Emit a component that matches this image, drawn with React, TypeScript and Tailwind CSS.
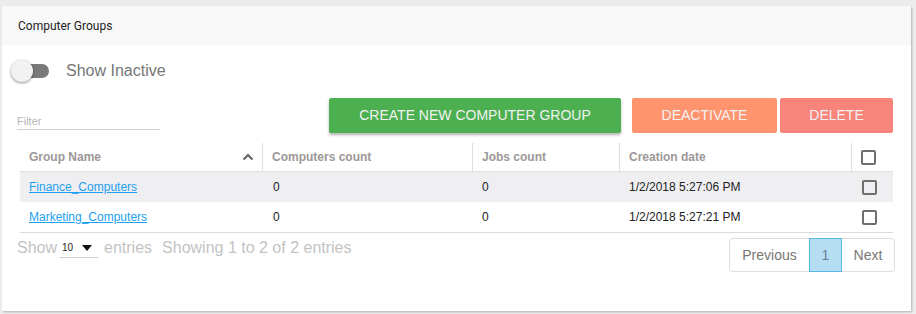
import React from 'react';

const rows = [
  { name: 'Finance_Computers', computers: 0, jobs: 0, created: '1/2/2018 5:27:06 PM' },
  { name: 'Marketing_Computers', computers: 0, jobs: 0, created: '1/2/2018 5:27:21 PM' },
];

const Box: React.FC = () => (
  <span className="block w-[15px] h-[15px] border-2 border-[#6f6f6f] rounded-[2px]" />
);

export default function App() {
  return (
    <div className="w-[916px] h-[314px] bg-[#ececec] pt-[6px] pl-[2px] font-['Liberation_Sans',Arial,sans-serif]">
      <div className="w-[909px] h-[305px] bg-white shadow-[1px_1px_2px_rgba(0,0,0,0.25)]">
        <div className="h-[39px] bg-[#f8f8f8] flex items-center pl-[16px] text-[12px] text-[#222] font-['Roboto',sans-serif]">
          Computer Groups
        </div>

        <div className="flex items-center h-[52px] pl-[10px]">
          <div className="relative w-[37px] h-[14px] bg-[#7a7a7a] rounded-full">
            <span className="absolute left-[-1px] top-[-4px] w-[22px] h-[22px] rounded-full bg-[#f2f2f2] shadow-[0_1px_3px_rgba(0,0,0,0.45)]" />
          </div>
          <span className="ml-[17px] text-[16px] text-[#767676]">Show Inactive</span>
        </div>

        <div className="flex items-start h-[36px] pl-[15px] pr-[16px]">
          <div className="w-[143px] h-[33px] flex items-end border-b border-[#d0d0d0]">
            <span className="text-[11px] text-[#b5b5b5]">Filter</span>
          </div>
          <div className="ml-auto mr-[2px] mt-[1px] flex h-[35px] text-[14px] text-[#f2f2f2]">
            <button className="w-[292px] bg-[#4caf50] rounded-[2px] shadow-[0_2px_3px_rgba(0,0,0,0.3)]">
              CREATE NEW COMPUTER GROUP
            </button>
            <button className="ml-[11px] w-[145px] bg-[#ff946e] rounded-[2px]">DEACTIVATE</button>
            <button className="ml-[3px] w-[113px] bg-[#f8847b] rounded-[2px]">DELETE</button>
          </div>
        </div>

        <div className="mx-[18px] mt-[10px] text-[12px]">
          <div className="flex h-[29px] border-b border-[#e0e0e0] font-bold text-[#9d9797]">
            <div className="w-[243px] flex items-center pl-[9px] pr-[8px] border-r border-[#e0e0e0]">
              Group Name
              <svg className="ml-auto" width="12" height="8" viewBox="0 0 12 8">
                <path d="M1.5 6.5 L6 2 L10.5 6.5" stroke="#666" strokeWidth="2.2" fill="none" />
              </svg>
            </div>
            <div className="w-[210px] flex items-center pl-[9px] border-r border-[#e0e0e0]">Computers count</div>
            <div className="w-[147px] flex items-center pl-[9px] border-r border-[#e0e0e0]">Jobs count</div>
            <div className="w-[232px] flex items-center pl-[9px] border-r border-[#e0e0e0]">Creation date</div>
            <div className="flex-1 flex items-center pl-[9px]">
              <Box />
            </div>
          </div>
          {rows.map((r, i) => (
            <div
              key={r.name}
              className={`flex h-[30px] items-center text-[#222] ${i === 0 ? 'bg-[#efeff1]' : 'bg-white'}`}
            >
              <div className="w-[243px] pl-[9px]">
                <a href="#" className="text-[#1ea0f0] underline">{r.name}</a>
              </div>
              <div className="w-[210px] pl-[10px]">{r.computers}</div>
              <div className="w-[147px] pl-[9px]">{r.jobs}</div>
              <div className="w-[232px] pl-[9px]">{r.created}</div>
              <div className="flex-1 pl-[10px]">
                <Box />
              </div>
            </div>
          ))}
          <div className="border-t border-[#dcdcdc]" />
        </div>

        <div className="flex items-start pl-[15px] pr-[16px] mt-[4px]">
          <div className="flex items-center text-[16px] text-[#c3c3c3] h-[22px]">
            <span>Show</span>
            <span className="ml-[3px] w-[38px] h-[19px] border-b border-[#cfcfcf] flex items-center text-[10px] text-[#222] pl-[2px]">
              10
              <svg className="ml-[9px]" width="10" height="6" viewBox="0 0 10 6">
                <path d="M0 0 H10 L5 6 Z" fill="#111" />
              </svg>
            </span>
            <span className="ml-[6px]">entries</span>
            <span className="ml-[10px]">Showing 1 to 2 of 2 entries</span>
          </div>
          <div className="ml-auto mt-[1px] flex h-[34px] text-[14px] text-[#777] border border-[#dedede] rounded-[4px]">
            <span className="w-[79px] flex items-center justify-center">Previous</span>
            <span className="w-[33px] flex items-center justify-center bg-[#b6def2] border border-[#5ab7e6] text-[#6a7f95] -my-px">1</span>
            <span className="w-[52px] flex items-center justify-center">Next</span>
          </div>
        </div>
      </div>
    </div>
  );
}
